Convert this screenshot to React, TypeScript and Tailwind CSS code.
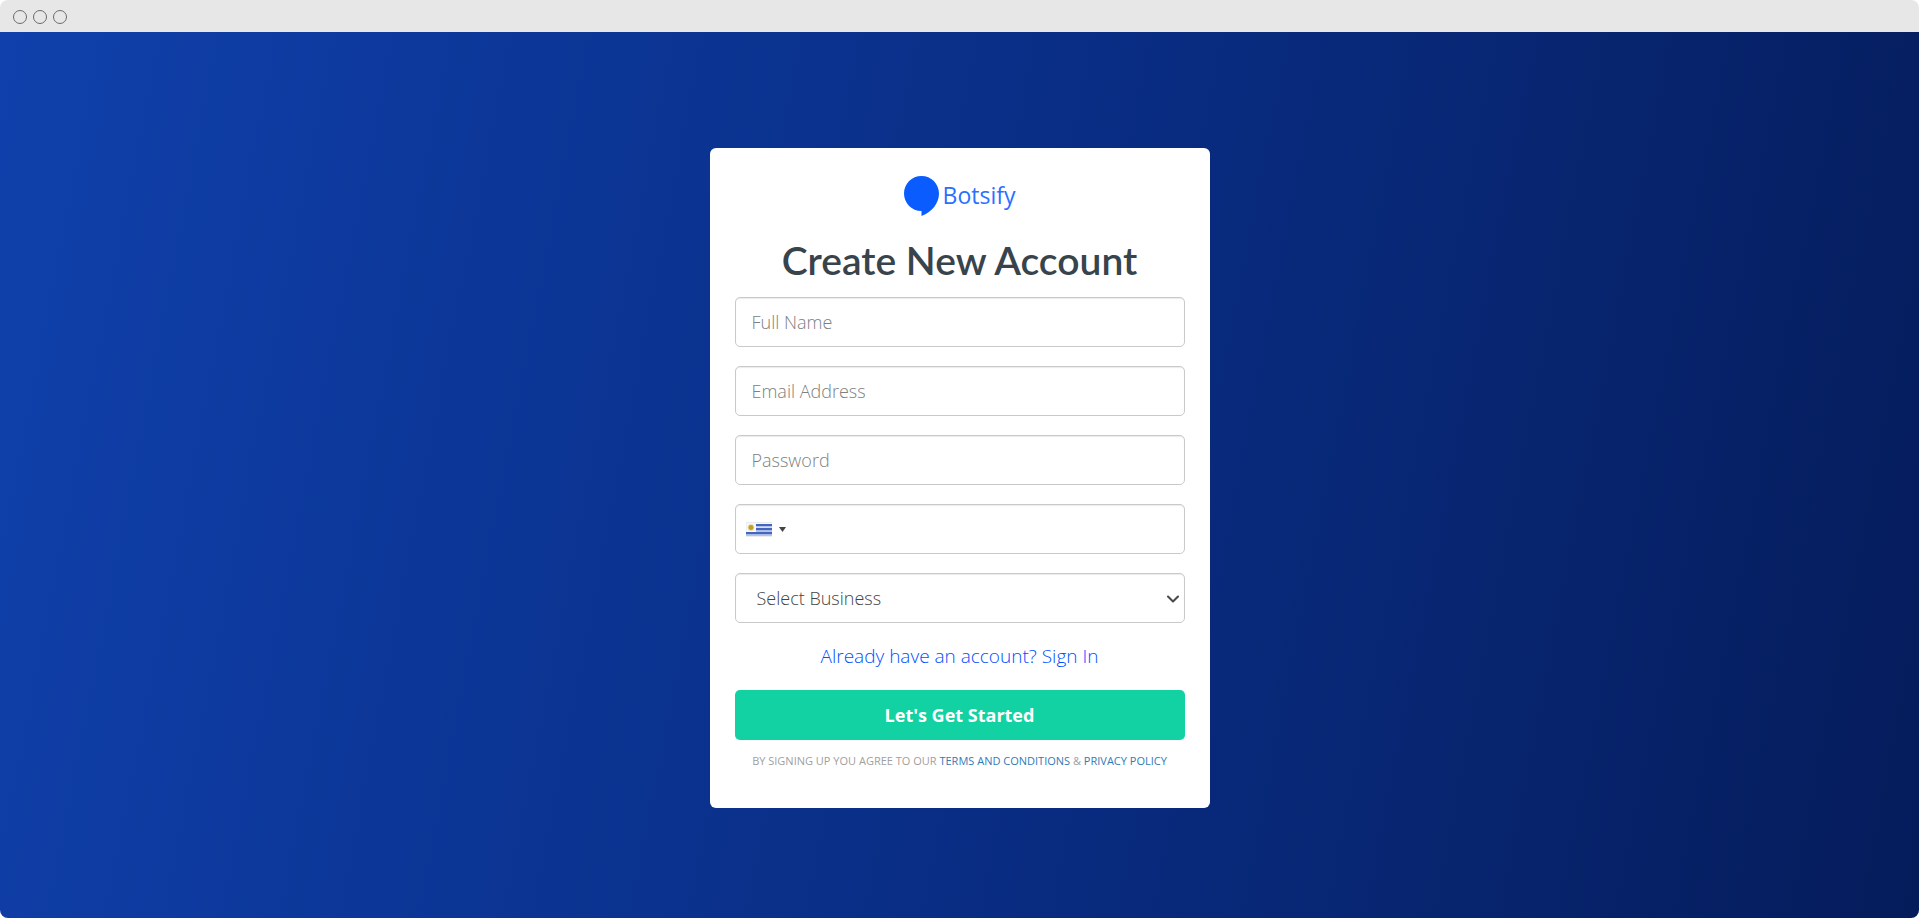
import React, { useState } from 'react';
import { ChevronDown } from 'lucide-react';

const fieldClass =
  'block w-full h-[50px] rounded-[5px] border border-[#c9c9c9] bg-white px-4 text-lg font-light text-[#444444] shadow-[inset_0_1px_1px_rgba(0,0,0,0.08)] outline-none placeholder:text-[#808080] focus:border-[#0a5cff]';

const textFields = [
  { id: 'name', label: 'Full Name', type: 'text' },
  { id: 'email', label: 'Email Address', type: 'email' },
  { id: 'password', label: 'Password', type: 'password' },
];

const businessTypes = ['Agency', 'E-commerce', 'Education', 'Healthcare', 'Other'];

const WindowBar: React.FC = () => (
  <div className="flex h-8 shrink-0 items-center gap-[6px] rounded-t-lg bg-[#e7e7e7] pt-[2px] pl-[13px]">
    {[0, 1, 2].map((dot) => (
      <span key={dot} className="h-[14px] w-[14px] rounded-full border border-[#6b6b6b]" />
    ))}
  </div>
);

const Logo: React.FC = () => (
  <div className="flex h-10 justify-center gap-1">
    <svg width="35" height="40" viewBox="0 0 35 40" aria-hidden="true">
      <path
        d="M17.5 0C27.2 0 35 7.8 35 17.5c0 9-6.500 18.500-17.500 22.500v-5C7.800 35 0 27.200 0 17.500S7.800 0 17.500 0z"
        fill="#0a5cff"
      />
    </svg>
    <span className="text-[23px] leading-[38px] text-[#2a70ff]">Botsify</span>
  </div>
);

const UruguayFlag: React.FC = () => (
  <svg width="26" height="15" viewBox="0 0 26 15" aria-hidden="true">
    <rect width="26" height="15" fill="#e9ebf1" />
    <rect x="0.500" y="1" width="25" height="13" fill="#f6f7fb" />
    <path d="M10 2h16v2H10zM10 6h16v2.500H10zM0 10h26v2.500H0z" fill="#4467bd" />
    <path d="M10 4h16v1.500H10zM10 8.500h16v1.500H10zM0 12.500h26v1.500H0z" fill="#b4c3ec" />
    <circle cx="5" cy="5.500" r="3.200" fill="#e6d79a" />
    <circle cx="5" cy="5.500" r="2.400" fill="#c2a022" />
  </svg>
);

const PhoneField: React.FC = () => (
  <div className="flex h-[50px] items-center rounded-[5px] border border-[#c9c9c9] shadow-[inset_0_1px_1px_rgba(0,0,0,0.08)]">
    <button type="button" aria-label="Country: Uruguay" className="flex h-full items-center gap-[7px] pr-2 pl-[10px]">
      <UruguayFlag />
      <svg width="7" height="5" viewBox="0 0 7 5" aria-hidden="true">
        <path d="M0 0h7L3.500 5z" fill="#444444" />
      </svg>
    </button>
    <input
      id="phone"
      type="tel"
      aria-label="Phone Number"
      className="h-full min-w-0 flex-1 bg-transparent text-lg font-light text-[#444444] outline-none"
    />
  </div>
);

const SignUpForm: React.FC = () => {
  const [values, setValues] = useState<Record<string, string>>({});
  const [business, setBusiness] = useState('');

  return (
    <form className="flex flex-col" onSubmit={(e) => e.preventDefault()}>
      <div className="flex flex-col gap-[19px]">
        {textFields.map((field) => (
          <input
            key={field.id}
            id={field.id}
            type={field.type}
            aria-label={field.label}
            placeholder={field.label}
            value={values[field.id] ?? ''}
            onChange={(e) => setValues({ ...values, [field.id]: e.target.value })}
            className={fieldClass}
          />
        ))}
        <PhoneField />
        <div className="relative">
          <select
            id="business"
            aria-label="Business"
            value={business}
            onChange={(e) => setBusiness(e.target.value)}
            className="block h-[50px] w-full appearance-none rounded-[5px] border border-[#c9c9c9] bg-white pr-8 pl-[21px] text-lg font-light text-[#444444] shadow-[inset_0_1px_1px_rgba(0,0,0,0.08)] outline-none"
          >
            <option value="">Select Business</option>
            {businessTypes.map((type) => (
              <option key={type} value={type}>
                {type}
              </option>
            ))}
          </select>
          <ChevronDown
            size={20}
            strokeWidth={2.5}
            className="pointer-events-none absolute top-4 right-[2px] text-[#4a4a4a]"
          />
        </div>
      </div>
      <a href="#signin" className="mt-5 self-center text-[19px] leading-[26px] font-light text-[#0050ff]">
        Already have an account? Sign In
      </a>
      <button type="submit" className="mt-[21px] h-[50px] rounded-[5px] bg-[#12d1a3] text-lg font-bold text-white">
        Let's Get Started
      </button>
    </form>
  );
};

export default function App() {
  return (
    <div className="flex min-h-screen flex-col bg-white font-['Open_Sans',sans-serif]">
      <WindowBar />
      <main className="flex flex-1 items-center justify-center rounded-b-lg bg-[linear-gradient(101deg,#0f40ab_0%,#092d84_53%,#051c5b_100%)] pt-[6px]">
        <section className="w-full max-w-[500px] rounded-md bg-white px-[25px] pt-7 pb-[37px]">
          <Logo />
          <h1 className="mt-[21px] mb-[14px] text-center font-['Lato',sans-serif] text-[39px] leading-[46px] font-semibold text-[#37444c]">
            Create New Account
          </h1>
          <SignUpForm />
          <p className="mt-[11px] text-center text-[11px] leading-5 text-[#a0a0a0] uppercase">
            By signing up you agree to our{' '}
            <a href="#terms" className="text-[#337ab7]">
              Terms and Conditions
            </a>{' '}
            &amp;{' '}
            <a href="#privacy" className="text-[#337ab7]">
              Privacy Policy
            </a>
          </p>
        </section>
      </main>
    </div>
  );
}
